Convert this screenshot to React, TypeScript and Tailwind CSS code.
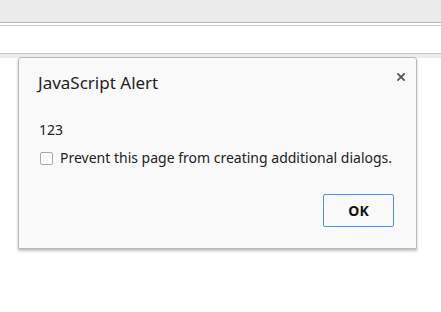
import React from "react";

const font = { fontFamily: '"Noto Sans", "Open Sans", sans-serif' };

function CloseIcon() {
  return (
    <svg width="8" height="8" viewBox="0 0 8 8" className="block">
      <path d="M1 1L7 7M7 1L1 7" stroke="#5a5a5a" strokeWidth="1.8" strokeLinecap="square" />
    </svg>
  );
}

export default function App() {
  return (
    <div className="relative h-[312px] w-[441px] overflow-hidden bg-white" style={font}>
      <div className="h-[23px] border-b border-[#b4b4b4] bg-[#ebebeb]" />
      <div className="h-[3px] border-b border-[#c8c8c8] bg-white" />
      <div className="h-[28px] border-b border-[#c4c4c4] bg-white" />
      <div className="h-[4px] bg-[#ececec]" />

      <div className="absolute left-[18px] top-[57px] flex h-[192px] w-[399px] flex-col rounded-t-[3px] border border-[#b9b9b9] bg-[#fafafa] shadow-[0_2px_3px_rgba(0,0,0,0.25)]">
        <div className="flex items-start justify-between pl-[19px] pr-[11px] pt-[14px]">
          <div className="text-[17px] leading-[22px] text-[#222]">JavaScript Alert</div>
          <div className="pt-[1px]">
            <CloseIcon />
          </div>
        </div>
        <div className="mt-[26px] pl-[20px] text-[14px] leading-[20px] text-[#222]">123</div>
        <label className="mt-[8px] flex items-center gap-[7px] pl-[21px] text-[14px] leading-[20px] text-[#222]">
          <span className="block h-[13px] w-[13px] rounded-[2px] border border-[#a9a9a9] bg-white" />
          Prevent this page from creating additional dialogs.
        </label>
        <div className="mt-auto flex justify-end pb-[21px] pr-[22px]">
          <button
            type="button"
            className="h-[33px] w-[71px] rounded-[2px] border border-[#4d90fe] bg-[#fafafa] text-[14px] font-bold text-[#111]"
          >
            OK
          </button>
        </div>
      </div>
    </div>
  );
}
